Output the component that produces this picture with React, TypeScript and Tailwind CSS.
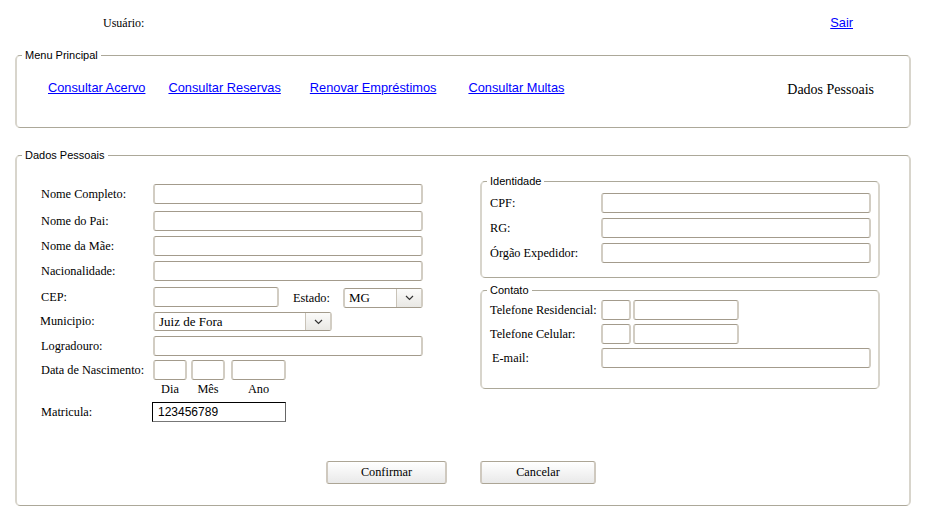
const serif = "font-['Liberation_Serif','Times_New_Roman',serif]";
const sans = "font-['Liberation_Sans',Arial,sans-serif]";

const fieldsetCls =
  "border border-[#aca899] border-x-2 border-x-[#d8d5cc] rounded-[5px]";
const legendCls = `ml-[5px] px-[3px] text-[11px] leading-[13px] text-black ${sans}`;
const inputCls =
  "h-[20px] border border-[#a39b8c] border-x-2 border-x-[#d2cdc3] rounded-[3px] bg-white";
const linkCls = `text-[12.8px] leading-[15px] text-[#0000ff] underline ${sans}`;

function Chevron() {
  return (
    <svg width="9" height="6" viewBox="0 0 9 6" fill="none">
      <path d="M1 1l3.5 3.5L8 1" stroke="#333" strokeWidth="1.2" />
    </svg>
  );
}

function Select({ value, className }: { value: string; className: string }) {
  return (
    <div
      className={`flex items-stretch border border-[#a39b8c] border-x-2 border-x-[#d2cdc3] rounded-[3px] bg-white ${className}`}
    >
      <span className={`flex-1 pl-[4px] text-[13px] leading-[16px] self-center text-black ${serif}`}>
        {value}
      </span>
      <span className="w-[25px] flex items-center justify-center border-l border-[#c9c3b8] bg-gradient-to-b from-[#fbfbfa] to-[#e9e8e4]">
        <Chevron />
      </span>
    </div>
  );
}

function Row({
  label,
  className = "",
  children,
}: {
  label: string;
  className?: string;
  children: React.ReactNode;
}) {
  return (
    <div className={`flex items-center ${className}`}>
      <span className={`w-[112px] shrink-0 text-[12.3px] text-black ${serif}`}>{label}</span>
      {children}
    </div>
  );
}

function RightRow({
  label,
  className = "",
  children,
}: {
  label: string;
  className?: string;
  children: React.ReactNode;
}) {
  return (
    <div className={`flex items-center ${className}`}>
      <span className={`w-[111px] shrink-0 text-[12.3px] text-black ${serif}`}>{label}</span>
      {children}
    </div>
  );
}

export default function App() {
  return (
    <div className="w-[925px] h-[520px] bg-white overflow-hidden">
      <div className="h-[49px] flex items-start pt-[16px]">
        <span className={`ml-[103px] text-[12px] leading-[14px] text-black ${serif}`}>Usuário:</span>
        <a href="#" className={`ml-auto mr-[72px] -mt-[1px] ${linkCls}`}>
          Sair
        </a>
      </div>

      <fieldset className={`ml-[15px] w-[896px] h-[79px] ${fieldsetCls}`}>
        <legend className={legendCls}>Menu Principal</legend>
        <div className="flex items-start pt-[18px]">
          <a href="#" className={`ml-[31px] ${linkCls}`}>Consultar Acervo</a>
          <a href="#" className={`ml-[23px] ${linkCls}`}>Consultar Reservas</a>
          <a href="#" className={`ml-[29px] ${linkCls}`}>Renovar Empréstimos</a>
          <a href="#" className={`ml-[32px] ${linkCls}`}>Consultar Multas</a>
          <span className={`ml-auto mr-[35px] mt-[2px] text-[14px] leading-[16px] text-black ${serif}`}>
            Dados Pessoais
          </span>
        </div>
      </fieldset>

      <fieldset className={`ml-[15px] mt-[21px] w-[896px] pb-[21px] ${fieldsetCls}`}>
        <legend className={legendCls}>Dados Pessoais</legend>
        <div className="flex items-start pt-[13px] pl-[24px]">
          <div className="w-[439px] mt-[9px] flex flex-col">
            <Row label="Nome Completo:">
              <div className={`w-[270px] ${inputCls}`} />
            </Row>
            <Row label="Nome do Pai:" className="mt-[7px]">
              <div className={`w-[270px] ${inputCls}`} />
            </Row>
            <Row label="Nome da Mãe:" className="mt-[5px]">
              <div className={`w-[270px] ${inputCls}`} />
            </Row>
            <Row label="Nacionalidade:" className="mt-[5px]">
              <div className={`w-[270px] ${inputCls}`} />
            </Row>
            <Row label="CEP:" className="mt-[5px]">
              <div className={`w-[126px] ${inputCls}`} />
              <span className={`ml-[14px] w-[50px] text-[12.3px] mt-[2px] text-black ${serif}`}>Estado:</span>
              <Select value="MG" className="w-[80px] h-[20px] mt-[2px]" />
            </Row>
            <Row label="Municipio:" className="mt-[4px] -ml-[1px]">
              <div className="ml-[1px]">
                <Select value="Juiz de Fora" className="w-[179px] h-[19px]" />
              </div>
            </Row>
            <Row label="Logradouro:" className="mt-[5px]">
              <div className={`w-[270px] ${inputCls}`} />
            </Row>
            <Row label="Data de Nascimento:" className="mt-[4px]">
              <div className={`w-[34px] ${inputCls}`} />
              <div className={`ml-[4px] w-[34px] ${inputCls}`} />
              <div className={`ml-[6px] w-[55px] ${inputCls}`} />
            </Row>
            <div className={`flex mt-[2px] h-[14px] text-[12.3px] leading-[14px] text-black ${serif}`}>
              <span className="ml-[112px] w-[34px] text-center">Dia</span>
              <span className="ml-[4px] w-[34px] text-center">Mês</span>
              <span className="ml-[6px] w-[55px] text-center">Ano</span>
            </div>
            <Row label="Matricula:" className="mt-[6px]">
              <div className="-ml-[1px] w-[134px] h-[20px] border border-black border-r-[#666] border-b-[#777] bg-white flex items-center">
                <span className={`pl-[5px] text-[12px] text-black ${sans}`}>123456789</span>
              </div>
            </Row>
          </div>

          <div className="w-[400px] flex flex-col">
            <fieldset className={`w-[400px] pb-[14px] ${fieldsetCls}`}>
              <legend className={legendCls}>Identidade</legend>
              <div className="pl-[8px] pt-[5px] flex flex-col">
                <RightRow label="CPF:">
                  <div className={`w-[270px] ${inputCls}`} />
                </RightRow>
                <RightRow label="RG:" className="mt-[5px]">
                  <div className={`w-[270px] ${inputCls}`} />
                </RightRow>
                <RightRow label="Órgão Expedidor:" className="mt-[5px]">
                  <div className={`w-[270px] ${inputCls}`} />
                </RightRow>
              </div>
            </fieldset>
            <fieldset className={`mt-[6px] w-[400px] pb-[20px] ${fieldsetCls}`}>
              <legend className={legendCls}>Contato</legend>
              <div className="pl-[8px] pt-[3px] flex flex-col">
                <RightRow label="Telefone Residencial:">
                  <div className={`w-[30px] ${inputCls}`} />
                  <div className={`ml-[2px] w-[106px] ${inputCls}`} />
                </RightRow>
                <RightRow label="Telefone Celular:" className="mt-[4px]">
                  <div className={`w-[30px] ${inputCls}`} />
                  <div className={`ml-[2px] w-[106px] ${inputCls}`} />
                </RightRow>
                <div className="flex items-center mt-[4px]">
                  <span className={`w-[111px] shrink-0 pl-[2px] text-[12.3px] text-black ${serif}`}>E-mail:</span>
                  <div className={`w-[270px] ${inputCls}`} />
                </div>
              </div>
            </fieldset>
          </div>
        </div>

        <div className="flex mt-[39px]">
          <button
            className={`ml-[309px] w-[121px] h-[23px] border border-[#aca595] border-x-2 border-x-[#cfc9bf] rounded-[3px] bg-gradient-to-b from-white to-[#e9e9e9] text-[12.3px] text-black ${serif}`}
          >
            Confirmar
          </button>
          <button
            className={`ml-[33px] w-[116px] h-[23px] border border-[#aca595] border-x-2 border-x-[#cfc9bf] rounded-[3px] bg-gradient-to-b from-white to-[#e9e9e9] text-[12.3px] text-black ${serif}`}
          >
            Cancelar
          </button>
        </div>
      </fieldset>
    </div>
  );
}
